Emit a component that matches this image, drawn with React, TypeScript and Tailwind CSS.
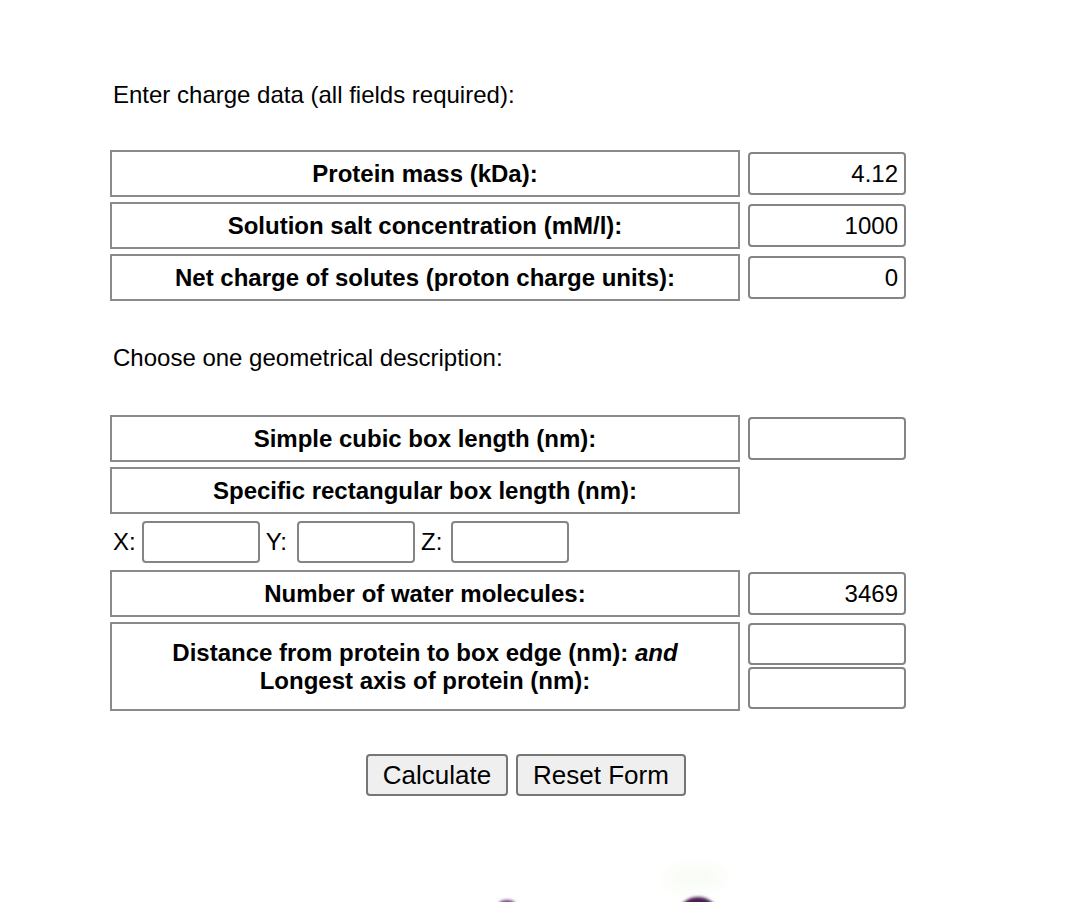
import React, { useState } from "react";

type Field = {
  label: React.ReactNode;
  value?: string;
  hasInput?: boolean;
};

const cellClass =
  "w-[630px] h-[47px] border-2 border-[#8a8a8a] flex items-center justify-center font-bold";

const inputClass =
  "w-[158px] h-[43px] border-2 border-[#858585] rounded-[4px] bg-white px-[6px] text-right text-[24px] outline-none";

const ChargeRow = ({ label, value, hasInput = true }: Field) => {
  const [val, setVal] = useState(value ?? "");
  return (
    <div className="flex items-center gap-[8px]">
      <div className={cellClass}>{label}</div>
      {hasInput && (
        <input
          className={inputClass}
          value={val}
          onChange={(e) => setVal(e.target.value)}
        />
      )}
    </div>
  );
};

const SmallInput = () => (
  <input className="w-[118px] h-[42px] border-2 border-[#858585] rounded-[4px] bg-white px-[6px] text-[24px] outline-none" />
);

export default function App() {
  return (
    <div
      className="relative w-[1078px] h-[902px] bg-white text-black text-[24px] leading-[28px] overflow-hidden"
      style={{ fontFamily: '"Liberation Sans", Arial, sans-serif' }}
    >
      <div className="pl-[110px] pt-[81px]">
        <p className="pl-[3px]">Enter charge data (all fields required):</p>

        {/* Charge data */}
        <div className="mt-[41px] flex flex-col gap-[5px]">
          <ChargeRow label="Protein mass (kDa):" value="4.12" />
          <ChargeRow label="Solution salt concentration (mM/l):" value="1000" />
          <ChargeRow
            label="Net charge of solutes (proton charge units):"
            value="0"
          />
        </div>

        <p className="pl-[3px] mt-[43px]">Choose one geometrical description:</p>

        {/* Geometry */}
        <div className="mt-[43px] flex flex-col gap-[5px]">
          <ChargeRow label="Simple cubic box length (nm):" />
          <ChargeRow label="Specific rectangular box length (nm):" hasInput={false} />

          <div className="flex items-center h-[44px] pl-[3px] my-[1px]">
            <span>X:</span>
            <span className="ml-[6px]"><SmallInput /></span>
            <span className="ml-[6px]">Y:</span>
            <span className="ml-[10px]"><SmallInput /></span>
            <span className="ml-[6px]">Z:</span>
            <span className="ml-[9px]"><SmallInput /></span>
          </div>

          <ChargeRow label="Number of water molecules:" value="3469" />

          <div className="flex items-start gap-[8px]">
            <div className="w-[630px] h-[89px] border-2 border-[#8a8a8a] flex flex-col items-center justify-center font-bold text-center">
              <span>
                Distance from protein to box edge (nm): <i>and</i>
              </span>
              <span>Longest axis of protein (nm):</span>
            </div>
            <div className="flex flex-col gap-[2px] pt-[1px]">
              <input className="w-[158px] h-[42px] border-2 border-[#858585] rounded-[4px] bg-white px-[6px] text-right text-[24px] outline-none" />
              <input className="w-[158px] h-[42px] border-2 border-[#858585] rounded-[4px] bg-white px-[6px] text-right text-[24px] outline-none" />
            </div>
          </div>
        </div>

        {/* Buttons */}
        <div className="mt-[43px] ml-[256px] flex gap-[8px]">
          <button className="w-[142px] h-[42px] border-2 border-[#767676] rounded-[4px] bg-[#efefef] text-[26px]">
            Calculate
          </button>
          <button className="w-[170px] h-[42px] border-2 border-[#767676] rounded-[4px] bg-[#efefef] text-[26px]">
            Reset Form
          </button>
        </div>
      </div>

      {/* Partially visible image at the bottom edge */}
      <svg
        className="absolute left-0 bottom-0"
        width="1078"
        height="50"
        viewBox="0 0 1078 50"
      >
        <defs>
          <filter id="blur" x="-50%" y="-50%" width="200%" height="200%">
            <feGaussianBlur stdDeviation="1.5" />
          </filter>
          <filter id="haze" x="-50%" y="-50%" width="200%" height="200%">
            <feGaussianBlur stdDeviation="8" />
          </filter>
        </defs>
        <ellipse cx="695" cy="26" rx="30" ry="12" fill="#f8fcf4" filter="url(#haze)" />
        <ellipse cx="507" cy="51" rx="8" ry="3" fill="#6b3a78" filter="url(#blur)" />
        <ellipse cx="698" cy="63" rx="20" ry="18" fill="#4a1d52" filter="url(#blur)" />
      </svg>
    </div>
  );
}
